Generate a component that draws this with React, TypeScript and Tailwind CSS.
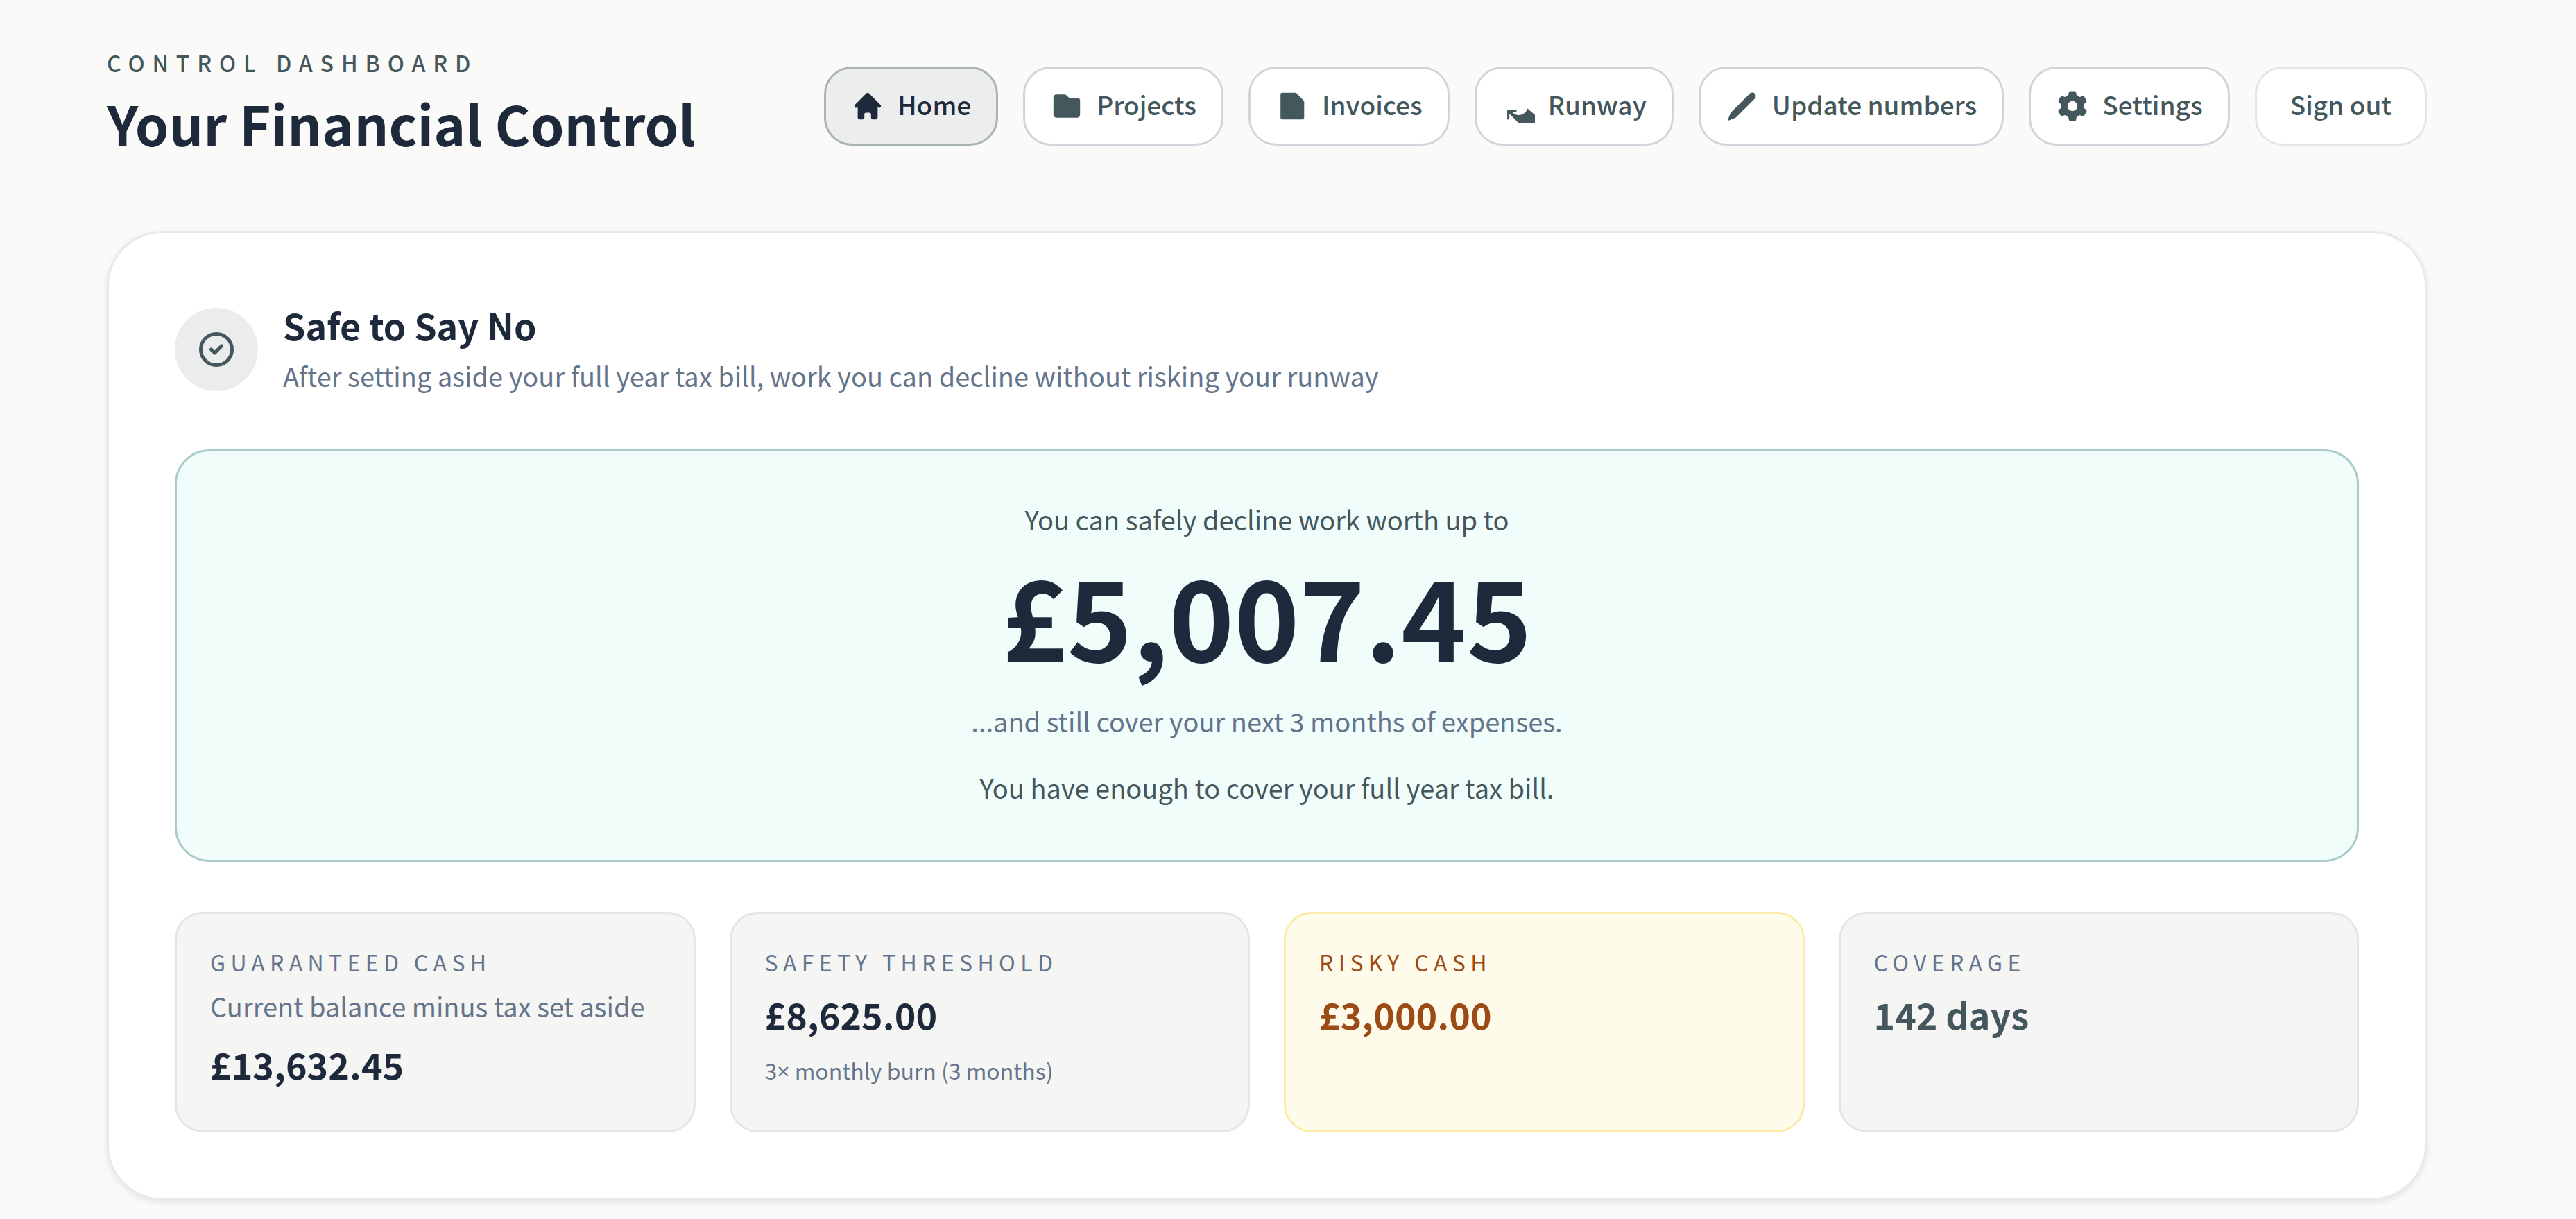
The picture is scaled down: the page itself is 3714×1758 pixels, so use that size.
import React from 'react'

// ================================
// INTERFACES & TYPES
// ================================

interface NavItem {
  label: string
  href: string
  icon: string
  active?: boolean
}

interface Stat {
  label: string
  value: string
  hint?: string
  note?: React.ReactNode
  tone?: 'default' | 'warning' | 'teal'
}

// ================================
// CONSTANTS
// ================================

const NAV_ITEMS: NavItem[] = [
  {
    label: 'Home',
    href: '#home',
    active: true,
    icon: 'M10.707 2.293a1 1 0 00-1.414 0l-7 7a1 1 0 001.414 1.414L4 10.414V17a1 1 0 001 1h2a1 1 0 001-1v-2a1 1 0 011-1h2a1 1 0 011 1v2a1 1 0 001 1h2a1 1 0 001-1v-6.586l.293.293a1 1 0 001.414-1.414l-7-7z',
  },
  {
    label: 'Projects',
    href: '#projects',
    icon: 'M3.75 3A1.75 1.75 0 0 0 2 4.75v10.5c0 .966.784 1.75 1.75 1.75h12.5A1.75 1.75 0 0 0 18 15.25v-8.5A1.75 1.75 0 0 0 16.25 5h-4.836a.25.25 0 0 1-.177-.073L9.823 3.513A1.75 1.75 0 0 0 8.586 3H3.75Z',
  },
  {
    label: 'Invoices',
    href: '#invoices',
    icon: 'M3 3.1A1.1 1.1 0 0 1 4.1 2h7.7a1.1 1.1 0 0 1 .78.32l4.3 4.3a1.1 1.1 0 0 1 .32.78v9.5a1.1 1.1 0 0 1-1.1 1.1h-12A1.1 1.1 0 0 1 3 16.9V3.1Z',
  },
  {
    label: 'Runway',
    href: '#runway',
    icon: 'M4 12.1h4.4a.65.65 0 0 1 0 1.3H6.1c1.3 1.3 2.7 2 4.3 2 2.3 0 4.3-1.5 5.15-3.9L20 15.3V20H10L4.65 14.6v2.9a.65.65 0 0 1-1.3 0v-4.75c0-.36.29-.65.65-.65Z',
  },
  {
    label: 'Update numbers',
    href: '#update',
    icon: 'm2.695 14.762-1.262 3.155a.5.5 0 0 0 .65.65l3.155-1.262a4 4 0 0 0 1.343-.886L17.5 5.501a2.121 2.121 0 0 0-3-3L3.58 13.419a4 4 0 0 0-.885 1.343Z',
  },
  {
    label: 'Settings',
    href: '#settings',
    icon: 'M7.84 1.804A1 1 0 0 1 8.82 1h2.36a1 1 0 0 1 .98.804l.331 1.652a6.993 6.993 0 0 1 1.929 1.115l1.598-.54a1 1 0 0 1 1.186.447l1.18 2.044a1 1 0 0 1-.205 1.251l-1.267 1.113a7.047 7.047 0 0 1 0 2.228l1.267 1.113a1 1 0 0 1 .206 1.25l-1.18 2.045a1 1 0 0 1-1.187.447l-1.598-.54a6.993 6.993 0 0 1-1.929 1.115l-.33 1.652a1 1 0 0 1-.98.804H8.82a1 1 0 0 1-.98-.804l-.331-1.652a6.993 6.993 0 0 1-1.929-1.115l-1.598.54a1 1 0 0 1-1.186-.447l-1.18-2.044a1 1 0 0 1 .205-1.251l1.267-1.114a7.05 7.05 0 0 1 0-2.227L1.821 7.773a1 1 0 0 1-.206-1.25l1.18-2.045a1 1 0 0 1 1.187-.447l1.598.54A6.992 6.992 0 0 1 7.51 3.456l.33-1.652ZM10 13a3 3 0 1 0 0-6 3 3 0 0 0 0 6Z',
  },
]

const STATS: Stat[] = [
  { label: 'Guaranteed cash', hint: 'Current balance minus tax set aside', value: '£13,632.45' },
  {
    label: 'Safety threshold',
    value: '£8,625.00',
    // The CJK family draws × full width, so take it from a Latin one
    note: (
      <>
        3<span className="font-['Open_Sans',sans-serif]">×</span> monthly burn (3 months)
      </>
    ),
  },
  { label: 'Risky cash', value: '£3,000.00', tone: 'warning' },
  { label: 'Coverage', value: '142 days', tone: 'teal' },
]

const STAT_TONES = {
  default: {
    box: 'border-[#e4e5e4] bg-[#f5f5f3]',
    label: 'text-[#64748b]',
    value: 'text-[#1e293b]',
  },
  warning: {
    box: 'border-[#fde9a8] bg-[#fffbeb]',
    label: 'text-[#9c4a16]',
    value: 'text-[#9c4a16]',
  },
  teal: {
    box: 'border-[#e4e5e4] bg-[#f5f5f3]',
    label: 'text-[#64748b]',
    value: 'text-[#43575c]',
  },
}

// ================================
// HELPER COMPONENTS
// ================================

const NavLink: React.FC<{ item: NavItem }> = ({ item }) => (
  <a
    href={item.href}
    aria-current={item.active ? 'page' : undefined}
    className={`flex h-[114px] items-center gap-[19px] rounded-[40px] border-3 px-9 ${
      item.active
        ? 'border-[#a9b2b5] bg-[#eceeed] text-[#1e293b]'
        : 'border-[#d1d5db] bg-white text-[#43575c]'
    }`}
  >
    <svg className="size-12" viewBox="0 0 20 20" fill="currentColor" fillRule="evenodd" aria-hidden="true">
      <path d={item.icon} />
    </svg>
    <span className="pb-1.5">{item.label}</span>
  </a>
)

const StatCard: React.FC<{ stat: Stat }> = ({ stat }) => {
  const tone = STAT_TONES[stat.tone ?? 'default']

  return (
    <div className={`rounded-[40px] border-3 px-12 py-[47px] ${tone.box}`}>
      <h3 className={`mb-1.5 text-[32px] leading-[44px] tracking-[0.23em] uppercase ${tone.label}`}>
        {stat.label}
      </h3>
      {stat.hint && <p className="text-[38px] leading-[72px] text-[#64748b]">{stat.hint}</p>}
      <p className={`text-[52px] leading-[96px] font-bold ${tone.value}`}>{stat.value}</p>
      {stat.note && <p className="mt-2 text-[32px] leading-[48px] text-[#64748b]">{stat.note}</p>}
    </div>
  )
}

// ================================
// MAIN COMPONENT
// ================================

export default function App() {
  return (
    <div className="min-h-screen bg-[#fafaf8] pt-[70px] pr-[215px] pl-[154px] font-['Noto_Sans_CJK_SC',sans-serif]">
      <header className="flex items-center justify-between">
        <div>
          <p className="text-[32px] leading-[40px] font-medium tracking-[0.34em] text-[#43575c] uppercase">
            Control dashboard
          </p>
          <h1 className="mt-2 text-[78px] leading-[118px] font-bold text-[#1e293b]">
            Your Financial Control
          </h1>
        </div>

        <nav className="flex gap-9 text-[37px] leading-[60px] font-medium">
          {NAV_ITEMS.map((item) => (
            <NavLink key={item.label} item={item} />
          ))}
          <button
            type="button"
            className="h-[114px] rounded-[40px] border-3 border-[#e4e5e4] bg-white px-12 pb-1.5 text-[#43575c]"
          >
            Sign out
          </button>
        </nav>
      </header>

      <main className="mt-[97px] rounded-[80px] border-3 border-[#e8eae9] bg-white p-[95px] shadow-[0_3px_8px_rgba(67,87,92,0.12)]">
        <div className="flex items-center gap-9">
          <div className="flex size-30 items-center justify-center rounded-full bg-[#ebedec] text-[#43575c]">
            <svg
              className="size-15"
              viewBox="0 0 24 24"
              fill="none"
              stroke="currentColor"
              strokeWidth="2"
              strokeLinecap="round"
              strokeLinejoin="round"
              aria-hidden="true"
            >
              <path d="M9 12l2 2 4-4m6 2a9 9 0 11-18 0 9 9 0 0118 0z" />
            </svg>
          </div>
          <div>
            <h2 className="text-[52px] leading-[76px] font-bold text-[#1e293b]">Safe to Say No</h2>
            <p className="text-[38px] leading-[70px] text-[#64748b]">
              After setting aside your full year tax bill, work you can decline without risking your runway
            </p>
          </div>
        </div>

        <section className="mt-[71px] rounded-[50px] border-3 border-[#abcaca] bg-[#f0fdfa] pt-[70px] pb-[76px] text-center text-[38px] leading-[56px] text-[#43575c]">
          <p>You can safely decline work worth up to</p>
          <p className="mt-3 text-[160px] leading-[192px] font-bold text-[#1e293b]">£5,007.45</p>
          <p className="mt-[31px] text-[#64748b]">...and still cover your next 3 months of expenses.</p>
          <p className="mt-10">You have enough to cover your full year tax bill.</p>
        </section>

        <section className="mt-[72px] grid grid-cols-4 gap-[49px]">
          {STATS.map((stat) => (
            <StatCard key={stat.label} stat={stat} />
          ))}
        </section>
      </main>
    </div>
  )
}
